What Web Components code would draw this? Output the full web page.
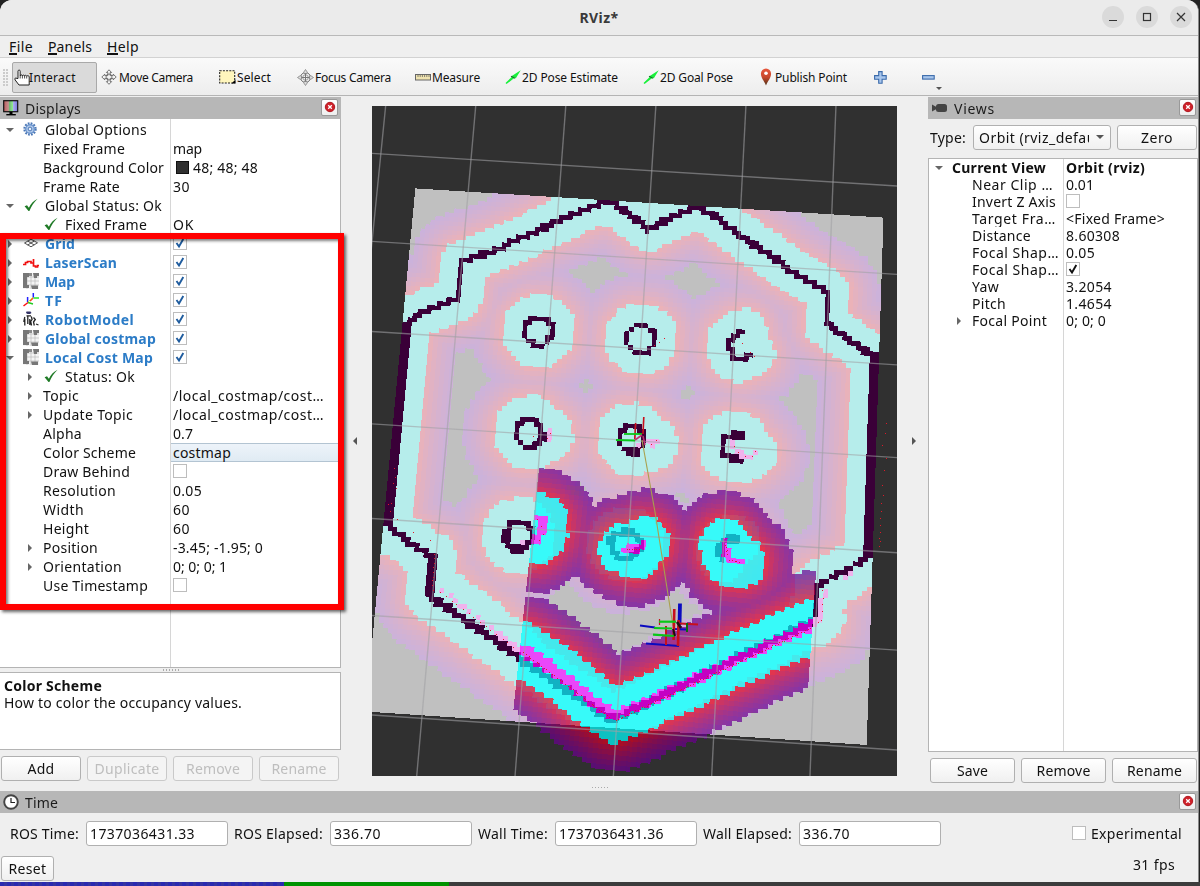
<!DOCTYPE html>
<html lang="en">
<head>
<meta charset="utf-8">
<title>RViz*</title>
<style>
html,body{margin:0;padding:0;background:#777;overflow:hidden}
body{font:14px/19px "Noto Sans","Open Sans",sans-serif;color:#111}
</style>
</head>
<body>
<rviz-window></rviz-window>
<script>
const define = (name, html, extra = {}) => {
  const tpl = document.createElement('template');
  tpl.innerHTML = typeof html === 'string' ? html : '';
  customElements.define(name, class extends HTMLElement {
    connectedCallback() {
      if (this.shadowRoot) return;
      const root = this.attachShadow({ mode: 'open' });
      if (typeof html === 'function') root.innerHTML = html(this);
      else root.append(tpl.content.cloneNode(true));
      if (extra.ready) extra.ready.call(this, root);
    }
  });
};
const at = (el, n, d = '') => el.getAttribute(n) ?? d;

/* One line of text, letter-spaced so that it fills the width w. */
define('fit-text', '<style>:host{display:inline-block;white-space:pre}span{display:inline-block;white-space:pre}</style><span><slot></slot></span>', {
  ready(root) {
    const w = +at(this, 'w', 0);
    if (!w) return;
    const s = root.firstElementChild.nextElementSibling, n = this.textContent.length;
    const natural = s.getBoundingClientRect().width;
    s.style.letterSpacing = ((w - natural) / n).toFixed(3) + 'px';
  }
});

const ICONS = {
  monitor: ['0 0 17 16', `<defs><linearGradient id="m"><stop offset="0" stop-color="#b85c5c"/><stop offset=".34" stop-color="#c89090"/><stop offset=".36" stop-color="#68b070"/><stop offset=".64" stop-color="#90e890"/><stop offset=".66" stop-color="#b0b0f4"/><stop offset="1" stop-color="#7878d8"/></linearGradient></defs><rect x=".7" y=".7" width="14" height="11" fill="url(#m)" stroke="#111" stroke-width="1.2"/><path d="M6.500 12h3v2h-3z"/><path d="M3.300 14h9.500v1.400H3.300z"/>`],
  gear: ['0 0 14 14', `<g fill="none" stroke="#4b77b5"><circle cx="7" cy="7" r="5.5" stroke-width="2.400" stroke-dasharray="1.700 1.180"/><circle cx="7" cy="7" r="4.300" fill="#b4ccec" stroke="#6f97cf" stroke-width="1.500"/><circle cx="7" cy="7" r="1.900" fill="#e6eefa" stroke-width="1"/></g>`],
  check: ['0 0 14 14', `<path d="M.6 8.300 3 7.200l1.900 2.600C6.700 6 9.500 2.800 13.600.8 10 4.200 7.500 8 5.400 13H4.500Z" fill="#1f7a26"/>`],
  grid: ['0 0 16 14', `<g fill="none" stroke="#555" stroke-width="1"><path d="M1.500 7 8 3.200l6.500 3.600L8 10.800zM4.700 5l6.500 4M11.300 5 4.700 9"/></g>`],
  laser: ['0 0 16 14', `<path d="M0 9.500h2.500V7.500H4.500V6.500h3.500v1.500h2.500V4v7h2v1h2v-1.500H16" fill="none" stroke="#f01010" stroke-width="1.700"/>`],
  map: ['0 0 16 16', `<rect width="16" height="16" fill="#f4f4f4"/><path d="M4 0v16M8 0v16M12 0v16M0 4h16M0 8h16M0 12h16" stroke="#b4b4b4" stroke-width=".6"/><path d="M0 0h6v4H4v8h2v3H0zM10 0h6v3h-2v2h-3zM8 12.500h7V16H9z" fill="#777"/><path d="M6 0h3v3H6z" fill="#8a8a8a"/>`],
  tf: ['0 0 16 14', `<g fill="none" stroke-width="1.500"><path d="M10.500 5H16" stroke="#2e2"/><path d="M10.300 0v4.500M4.600 4v5" stroke="#22f"/><path d="m10 5-3 3M5 9.500.5 13" stroke="#f11"/><path d="m5 9.500 5 1.500" stroke="#2c2"/></g><path d="m5 9 5-4.500" stroke="#dd2" stroke-width="1"/>`],
  robot: ['0 0 16 16', `<path d="M3.500.500h4L8.500 2 7 3H4.500L3 2z" fill="#336"/><path d="M3.500 4.800h4.500M4.800 5.500v7.500M1.800 6l-1 5M8.300 5.500l.8 3-1.400 2 .8 4M10.500 6.500l1.800 2-1.800 2.500.8 3.500M13 13l2.500 1M1.800 8v6.500M6.800 8v6" stroke="#222" stroke-width="1.300" fill="none"/>`],
  camera: ['0 0 17 10', `<rect x="5" y="1" width="11" height="8" rx="2.500" fill="#444"/><path d="M1 1.500 5.500 4v2L1 8.500z" fill="#444"/>`],
  clock: ['0 0 16 16', `<circle cx="8" cy="8" r="6.800" fill="#fff" stroke="#444" stroke-width="1.900"/><path d="M8 4v4.500h4" fill="none" stroke="#222" stroke-width="1.200"/>`],
  hand: ['0 0 16 17', `<path d="M4 9.500V2.200C4 .6 6.200.6 6.200 2.200V7c0-1.500 2.200-1.500 2.200 0 0-1.200 2.200-1.200 2.200.1 0-1.100 2.100-1 2.100.2.300-.9 2.500-.8 2.500.5V16H5L1.200 11C.1 9.500 1.700 8.200 3 9.500z" fill="#fff" stroke="#222" stroke-width="1"/><path d="M6.200 7v2.500M8.400 7v2.500M10.600 7v2.500M12.700 7.500v2" stroke="#222" stroke-width=".8"/>`],
  move: ['0 0 16 16', `<path d="m8 .8 2.600 2.700H9.200V6.600h3V5.200L15.200 8l-3 2.800V9.400h-3v3.200h1.400L8 15.300l-2.600-2.700h1.400V9.400h-3v1.400L.8 8l3-2.800v1.400h3V3.500H5.400z" fill="#f4f4f4" stroke="#555" stroke-width=".8"/><circle cx="8" cy="8" r="3" fill="none" stroke="#666" stroke-width=".8"/>`],
  select: ['0 0 17 14', `<rect x=".7" y=".7" width="15" height="12.300" fill="#fff6bd" stroke="#222" stroke-width="1.100" stroke-dasharray="2 1.200"/><path d="m16.500 9.500-4 4h4z"/>`],
  focus: ['0 0 17 17', `<g fill="none" stroke="#777"><circle cx="8.500" cy="8.500" r="5"/><circle cx="8.500" cy="8.500" r="2.800" stroke="#999"/><path d="M8.500 3v11M3 8.500h11"/></g><path d="M8.500.5 10.200 3v1.500H6.800V3zM8.500 16.500l1.700-2.500v-1.500H6.800V14zM.5 8.500 3 6.800h1.500v3.400H3zM16.500 8.500 14 6.800h-1.500v3.400H14z" fill="#ddd" stroke="#777" stroke-width=".7"/>`],
  ruler: ['0 0 16 7', `<rect x=".5" y=".5" width="15" height="5.500" fill="#efe3b0" stroke="#666"/><path d="M3 1v2M5.200 1v2M7.400 1v2M9.600 1v2M11.800 1v2M14 1v2" stroke="#555" stroke-width=".7"/>`],
  arrow: ['0 0 16 14', `<path d="M.5 13 7 6.700 6 6.500 15.700.3 10.700 8.500l-.8-1L1.600 14z" fill="#18f03a"/><path d="m6 6.200 4 2" stroke="#16702a" stroke-width="1.200"/>`],
  pin: ['0 0 12 18', `<defs><linearGradient id="p" x2="0" y2="1"><stop stop-color="#e8573c"/><stop offset=".5" stop-color="#c9482c"/><stop offset="1" stop-color="#4d3218"/></linearGradient></defs><path d="M6 17.500C4.500 13.500.9 10 .9 5.800a5.100 5.300 0 0 1 10.200 0C11.100 10 7.500 13.500 6 17.500z" fill="url(#p)"/><circle cx="6" cy="5.300" r="1.800" fill="#fff"/>`],
  plus: ['0 0 13 13', `<path d="M4.700.6h3.400v4h4.100v3.600H8.100v4H4.700v-4H.6V4.600h4.100z" fill="#a9c6ec" stroke="#3b6bab" stroke-width="1.100"/>`],
  minus: ['0 0 13 5', `<rect x=".6" y=".6" width="11.600" height="3.500" fill="#a9c6ec" stroke="#3b6bab" stroke-width="1.100"/>`],
  close: ['0 0 12 12', `<circle cx="6" cy="6" r="4.700" fill="#cf2029" stroke="#b01820"/><path d="m4.200 4.200 3.600 3.600M7.800 4.200 4.200 7.800" stroke="#fff" stroke-width="1.300"/>`]
};
define('ui-icon', el => {
  const [vb, body] = ICONS[at(el, 'name')], [, , w, h] = vb.split(' ');
  return `<style>:host{display:inline-flex;width:${w}px;height:${h}px;flex:none}svg{display:block}</style><svg width="${w}" height="${h}" viewBox="${vb}">${body}</svg>`;
});

define('title-bar', `<style>
:host{display:grid;grid-template-columns:1fr auto 1fr;align-items:center;height:35px;background:#ebebeb;border-bottom:1px solid #b9b9b9;box-sizing:content-box}
b{grid-column:2;color:#3a3a3a;font-size:14px}
div{display:flex;justify-content:flex-end;gap:12px;padding-right:6px;margin-top:-1px}
i{width:22px;height:22px;border-radius:50%;background:#dadada}
svg{display:block}
</style><b><fit-text w="39">RViz*</fit-text></b><div>
<i><svg width="22" height="22"><path d="M7 14.500h8" stroke="#333" stroke-width="1.200"/></svg></i>
<i><svg width="22" height="22"><rect x="7.500" y="7.500" width="7" height="7" fill="none" stroke="#333" stroke-width="1.200"/></svg></i>
<i><svg width="22" height="22"><path d="m7 7 8 8m0-8-8 8" stroke="#333" stroke-width="1.200"/></svg></i></div>`);

define('menu-bar', `<style>
:host{display:flex;height:21px;padding-left:9px;gap:15px;background:#efefef;border-bottom:1px solid #d2d2d2;align-items:center}
u{text-decoration:none;display:inline-block;line-height:14px;height:13px;border-bottom:2px solid #111}
</style><fit-text w="24"><u>F</u>ile</fit-text><fit-text w="44"><u>P</u>anels</fit-text><fit-text w="32"><u>H</u>elp</fit-text>`);

define('tool-button', el => `<style>
:host{display:flex;align-items:center;height:31px;margin-left:${at(el, 'gap', 0)}px;gap:${at(el, 'in', 1)}px;font-size:12px;box-sizing:border-box;border:1px solid transparent}
:host([on]){width:85px;border:1px solid #a9a9a9;border-radius:2px;background:#dadada;padding-left:1px}
fit-text{margin-left:${at(el, 'tx', 0)}px}
</style><ui-icon name="${at(el, 'icon')}"></ui-icon>${at(el, 'w') ? `<fit-text w="${at(el, 'w')}">${at(el, 'label')}</fit-text>` : ''}`);

define('tool-bar', `<style>
:host{display:flex;align-items:center;height:38px;box-sizing:border-box;background:linear-gradient(#fafafa,#ededed);border-bottom:1px solid #b4b4b4;padding-top:1px}
.g{width:6px;height:17px;margin:0 3px;background:radial-gradient(circle at 1px 1px,#ccc .8px,transparent 1px) 0 0/3px 3px}
.d{align-self:flex-end;margin-bottom:5px;margin-left:0;border:3px solid transparent;border-top-color:#555;border-bottom:0}
</style><div class="g"></div>
<tool-button on icon="hand" w="47" in="0" tx="-1" label="Interact"></tool-button>
<tool-button icon="move" gap="3" in="2" w="74" label="Move Camera"></tool-button>
<tool-button icon="select" gap="24" w="34" label="Select"></tool-button>
<tool-button icon="focus" gap="24" w="76" label="Focus Camera"></tool-button>
<tool-button icon="ruler" gap="22" w="48" label="Measure"></tool-button>
<tool-button icon="arrow" gap="23" w="96" label="2D Pose Estimate"></tool-button>
<tool-button icon="arrow" gap="23" w="73" label="2D Goal Pose"></tool-button>
<tool-button icon="pin" gap="25" in="3" w="72" label="Publish Point"></tool-button>
<tool-button icon="plus" gap="25"></tool-button>
<tool-button icon="minus" gap="33"></tool-button><div class="d"></div>`);

define('dock-title', el => `<style>
:host{display:flex;align-items:center;height:22px;flex:none;background:#b7b7b7;padding-left:3px;color:#1c1c1c;position:relative}
fit-text{margin-left:${at(el, 'tx', 5)}px;padding-top:1px}
span{margin-left:auto;width:15px;height:15px;border:1px solid #999;border-radius:2px;background:linear-gradient(#fff,#eee);display:flex;align-items:center;justify-content:center;margin-right:${at(el, 'cx', 2)}px;margin-bottom:2px}
</style><ui-icon name="${at(el, 'icon')}"></ui-icon><fit-text w="${at(el, 'w')}">${at(el, 'label')}</fit-text><span><ui-icon name="close"></ui-icon></span>`);

define('push-button', `<style>
:host{display:flex;align-items:center;justify-content:center;box-sizing:border-box;height:25px;border:1px solid #b0b0b0;border-radius:3px;background:linear-gradient(#fff,#f0f0f0);flex:1 1 0}
:host([off]){color:#bebebe;border-color:#c9c9c9;background:#f4f4f4}
</style><slot></slot>`);

define('check-box', el => `<style>:host{display:block;width:12px;height:12px;border:1px solid #bdbdbd;background:#fff;flex:none}svg{display:block}</style>
${el.hasAttribute('c') ? `<svg width="12" height="12"><path d="M2.500 6 5 9.500 9.300 2" fill="none" stroke="${at(el, 'c')}" stroke-width="1.900"/></svg>` : ''}`);

/* A property row: ax = arrow position, ix = icon, lx = label start, col = value column start */
define('tree-row', el => {
  const a = at(el, 'arrow'), ax = +at(el, 'ax', 0), ix = +at(el, 'ix', 0), lx = +at(el, 'lx', 43), col = +at(el, 'col', 171);
  return `<style>
:host{display:grid;grid-template-columns:${col}px 1fr;height:${at(el, 'h', 19)}px;line-height:${at(el, 'h', 19)}px;flex:none}
.l{display:flex;align-items:center;overflow:hidden;box-sizing:border-box;padding-left:${a ? ax : ix || lx}px}
.a{width:8px;margin-right:${(ix || lx) - ax - 8}px;flex:none;display:flex}
ui-icon{margin-right:${Math.max(0, lx - ix - (at(el, 'icon') ? +ICONS[at(el, 'icon')][0].split(' ')[2] : 0))}px;margin-top:-2px}
.b{font-weight:bold}.blue{color:#2c7cc7;font-weight:bold}
.v{display:flex;align-items:center;padding-left:2px;box-sizing:border-box}
.sel{background:linear-gradient(#eef4fa,#dfeaf3);box-shadow:inset 0 1px #b3c4d2,inset 0 -1px #b3c4d2}
i{width:11px;height:11px;border:1px solid #111;background:#303030;margin:0 4px 0 3px}
check-box{margin-top:-2px}
</style><div class="l ${at(el, 'cls')}">${a ? `<span class="a"><svg width="8" height="8"><path d="${a === 'd' ? 'M0 2h8L4 6z' : 'M2 0v8l4-4z'}" fill="#666"/></svg></span>` : ''}${at(el, 'icon') ? `<ui-icon name="${at(el, 'icon')}"></ui-icon>` : ''}<fit-text w="${at(el, 'lw')}">${at(el, 'label')}</fit-text></div>
<div class="v ${at(el, 'cls') === 'b' ? 'b' : ''} ${el.hasAttribute('sel') ? 'sel' : ''}">${el.hasAttribute('sw') ? '<i></i>' : ''}${at(el, 'box') === 'off' ? '<check-box></check-box>' : at(el, 'box') ? `<check-box c="${at(el, 'box')}"></check-box>` : ''}${at(el, 'v') ? `<fit-text w="${at(el, 'vw')}">${at(el, 'v').replace(/</g, '&lt;')}</fit-text>` : ''}</div>`;
});

const top0 = 'arrow="r" ax="6" ix="23" lx="45" cls="blue" box="#1f5c9e"';
define('displays-panel', `<style>
:host{display:flex;flex-direction:column;width:341px;position:relative}
.tree{height:549px;box-sizing:border-box;border:solid #b4b4b4;border-width:0 1px 1px 0;background:linear-gradient(#d6d6d6,#d6d6d6) 170px 0/1px 100% no-repeat #fff;display:flex;flex-direction:column;padding-top:1px}
.dots{height:4px;width:18px;margin:0 auto;background:radial-gradient(circle,#aaa .7px,transparent 1px) 0 0/3px 4px}
.help{height:78px;box-sizing:border-box;border:1px solid #b4b4b4;border-left:0;background:#fff;padding:4px 4px;line-height:17px;display:flex;flex-direction:column}
.btn{display:flex;gap:6px;padding:6px 2px 0 1px}
.mark{position:absolute;left:0;top:136px;width:332px;height:365px;border:6px solid red;box-shadow:2px 2px 3px rgba(0,0,0,.6),inset 2px 2px 3px rgba(0,0,0,.5);pointer-events:none}
</style>
<dock-title icon="monitor" label="Displays" w="56" cx="3"></dock-title>
<div class="tree">
<tree-row arrow="d" ax="6" ix="23" lx="45" icon="gear" label="Global Options" lw="102"></tree-row>
<tree-row label="Fixed Frame" lw="82" v="map" vw="29"></tree-row>
<tree-row label="Background Color" lw="121" sw v="48; 48; 48" vw="65"></tree-row>
<tree-row label="Frame Rate" lw="77" v="30" vw="17"></tree-row>
<tree-row arrow="d" ax="6" ix="24" lx="45" icon="check" label="Global Status: Ok" lw="117"></tree-row>
<tree-row ix="44" lx="65" icon="check" label="Fixed Frame" lw="82" v="OK" vw="21"></tree-row>
<tree-row ${top0} icon="grid" label="Grid" lw="30"></tree-row>
<tree-row ${top0} icon="laser" label="LaserScan" lw="72"></tree-row>
<tree-row ${top0} icon="map" label="Map" lw="30"></tree-row>
<tree-row ${top0} icon="tf" label="TF" lw="18"></tree-row>
<tree-row ${top0} icon="robot" label="RobotModel" lw="89"></tree-row>
<tree-row ${top0} icon="map" label="Global costmap" lw="111"></tree-row>
<tree-row ${top0.replace('"r"', '"d"')} icon="map" label="Local Cost Map" lw="108"></tree-row>
<tree-row arrow="r" ax="26" ix="44" lx="65" icon="check" label="Status: Ok" lw="70"></tree-row>
<tree-row arrow="r" ax="26" label="Topic" lw="36" v="/local_costmap/cost…" vw="151"></tree-row>
<tree-row arrow="r" ax="26" label="Update Topic" lw="90" v="/local_costmap/cost…" vw="151"></tree-row>
<tree-row label="Alpha" lw="39" v="0.7" vw="20"></tree-row>
<tree-row label="Color Scheme" lw="93" sel v="costmap" vw="58"></tree-row>
<tree-row label="Draw Behind" lw="87" box="off"></tree-row>
<tree-row label="Resolution" lw="73" v="0.05" vw="29"></tree-row>
<tree-row label="Width" lw="41" v="60" vw="17"></tree-row>
<tree-row label="Height" lw="46" v="60" vw="17"></tree-row>
<tree-row arrow="r" ax="26" label="Position" lw="55" v="-3.45; -1.95; 0" vw="90"></tree-row>
<tree-row arrow="r" ax="26" label="Orientation" lw="79" v="0; 0; 0; 1" vw="54"></tree-row>
<tree-row label="Use Timestamp" lw="105" box="off"></tree-row>
</div>
<div class="dots"></div>
<div class="help"><b><fit-text w="98">Color Scheme</fit-text></b><fit-text w="238">How to color the occupancy values.</fit-text></div>
<div class="btn"><push-button><fit-text w="27">Add</fit-text></push-button><push-button off><fit-text w="65">Duplicate</fit-text></push-button><push-button off><fit-text w="54">Remove</fit-text></push-button><push-button off><fit-text w="55">Rename</fit-text></push-button></div>
<div class="mark"></div>`);

const vr = 'h="17" col="135" lx="43"';
define('views-panel', `<style>
:host{display:flex;flex-direction:column;width:270px}
.type{display:flex;align-items:center;height:39px;box-sizing:border-box;padding:0 1px 2px 2px}
.combo{width:136px;height:23px;margin-left:7px;margin-right:6px;border:1px solid #b0b0b0;border-radius:3px;background:linear-gradient(#fff,#f0f0f0);display:flex;align-items:center}
.combo div{padding-left:5px;overflow:hidden;width:110px}
.combo svg{margin-left:7px}
push-button{flex:1}
.tree{height:594px;box-sizing:border-box;border:1px solid #b4b4b4;background:linear-gradient(#d6d6d6,#d6d6d6) 134px 0/1px 100% no-repeat #fff;display:flex;flex-direction:column}
.btn{display:flex;gap:6px;padding:6px 1px 0 2px}
</style>
<dock-title icon="camera" label="Views" w="41" tx="6"></dock-title>
<div class="type"><fit-text w="36">Type:</fit-text><div class="combo"><div><fit-text w="131">Orbit (rviz_default)</fit-text></div><svg width="8" height="5"><path d="M0 0h8L4 4z" fill="#555"/></svg></div><push-button><fit-text w="32">Zero</fit-text></push-button></div>
<div class="tree">
<tree-row h="17" col="135" arrow="d" ax="6" lx="23" cls="b" label="Current View" lw="94" v="Orbit (rviz)" vw="79"></tree-row>
<tree-row ${vr} label="Near Clip …" lw="81" v="0.01" vw="28"></tree-row>
<tree-row ${vr} label="Invert Z Axis" lw="84" box="off"></tree-row>
<tree-row ${vr} label="Target Fra…" lw="84" v="<Fixed Frame>" vw="99"></tree-row>
<tree-row ${vr} label="Distance" lw="59" v="8.60308" vw="54"></tree-row>
<tree-row ${vr} label="Focal Shap…" lw="87" v="0.05" vw="29"></tree-row>
<tree-row ${vr} label="Focal Shap…" lw="87" box="#111"></tree-row>
<tree-row ${vr} label="Yaw" lw="27" v="3.2054" vw="46"></tree-row>
<tree-row ${vr} label="Pitch" lw="34" v="1.4654" vw="46"></tree-row>
<tree-row h="17" col="135" arrow="r" ax="26" lx="43" label="Focal Point" lw="75" v="0; 0; 0" vw="40"></tree-row>
</div>
<div class="btn"><push-button><fit-text w="31">Save</fit-text></push-button><push-button><fit-text w="54">Remove</fit-text></push-button><push-button><fit-text w="55">Rename</fit-text></push-button></div>`);

define('time-panel', `<style>
:host{display:flex;flex-direction:column;height:91px;background:#efefef}
.row{display:flex;align-items:center;height:40px;padding:0 0 0 10px}
.in{height:23px;width:137px;padding-left:3px;border:1px solid #b0b0b0;border-radius:3px;background:#fff;display:flex;align-items:center;margin:0 6px 0 7px}
check-box{margin-left:auto;margin-right:5px}
.row>fit-text:last-child{margin-right:16px}
.foot{display:flex;justify-content:space-between;padding:3px 23px 0 1px}
.foot push-button{flex:none;width:53px}
.foot>fit-text{margin-top:-1px}
</style>
<dock-title icon="clock" label="Time" w="33" tx="6"></dock-title>
<div class="row"><fit-text w="69">ROS Time:</fit-text><div class="in"><fit-text w="105">1737036431.33</fit-text></div><fit-text w="89">ROS Elapsed:</fit-text><div class="in"><fit-text w="47">336.70</fit-text></div><fit-text w="70">Wall Time:</fit-text><div class="in"><fit-text w="105">1737036431.36</fit-text></div><fit-text w="89">Wall Elapsed:</fit-text><div class="in"><fit-text w="47">336.70</fit-text></div><check-box></check-box><fit-text w="91">Experimental</fit-text></div>
<div class="foot"><push-button><fit-text w="38">Reset</fit-text></push-button><fit-text w="42">31 fps</fit-text></div>`);

/* 3D viewport: ground grid, static map, global and local costmaps, TF frames */
define('render-view', `<style>:host{display:block;width:525px;height:670px}canvas{display:block}</style><canvas width="525" height="670"></canvas>`, {
  ready(root) {
    const X0 = 372, Y0 = 106, W = 525, H = 670;
    const ctx = root.querySelector('canvas').getContext('2d');
    const src = [[0, 0], [4, 0], [4, 6], [0, 6]], dst = [[471, 159.5], [833, 182], [811.2, 744.3], [421.8, 718.3]];
    const solve = (s, d) => {
      const A = [];
      s.forEach(([x, y], i) => { const [u, v] = d[i]; A.push([x, y, 1, 0, 0, 0, -u * x, -u * y, u], [0, 0, 0, x, y, 1, -v * x, -v * y, v]); });
      for (let c = 0; c < 8; c++) {
        let p = c; for (let r = c; r < 8; r++) if (Math.abs(A[r][c]) > Math.abs(A[p][c])) p = r;
        [A[c], A[p]] = [A[p], A[c]];
        for (let r = 0; r < 8; r++) if (r !== c) { const f = A[r][c] / A[c][c]; for (let k = c; k < 9; k++) A[r][k] -= f * A[c][k]; }
      }
      const h = A.map((r, i) => r[8] / r[i]);
      return (x, y) => { const w = h[6] * x + h[7] * y + 1; return [(h[0] * x + h[1] * y + h[2]) / w, (h[3] * x + h[4] * y + h[5]) / w]; };
    };
    const toScreen = solve(src, dst), toWorld = solve(dst, src);
    const poly = (pts, t = .031) => { const o = []; for (let i = 1; i < pts.length; i++) o.push([...toWorld(...pts[i - 1]), ...toWorld(...pts[i]), t]); return o; };
    const ring = (l, t, r, b) => { const a = (r - l) * .3, c = (b - t) * .3; return poly([[l + a, t], [r - a, t], [r, t + c], [r, b - c], [r - a, b], [l + a, b], [l, b - c], [l, t + c], [l + a, t]]); };
    const walls = [
      ...poly([[388, 522], [407, 326]], .032), ...poly([[406, 325], [411, 319], [430, 309], [458, 299]], .037), ...poly([[459, 299], [463, 262]], .022),
      ...poly([[463, 262], [500, 248], [535, 232]], .034), ...poly([[535, 232], [560, 220], [600, 203], [613, 203], [630, 215], [649, 229], [668, 219], [697, 207], [716, 217], [738, 234], [770, 255], [790, 270], [828, 292]], .038),
      ...poly([[828, 292], [827, 325]], .026), ...poly([[828, 325], [850, 341], [873, 356]], .036), ...poly([[874, 356], [867, 556]], .042),
      ...poly([[866, 558], [845, 571], [820, 584]], .03), ...poly([[817, 585], [814, 615]], .03),
      ...poly([[388, 525], [405, 540], [431, 556]], .035), ...poly([[432, 556], [430, 596]], .04), ...poly([[433, 598], [517, 656], [613, 721]], .04), ...poly([[613, 720], [730, 661], [812, 622]], .04)
    ];
    const rings = [ring(525, 318, 552, 345), ring(627, 326, 654, 352), ring(517, 419, 542, 446), ring(620, 426, 644, 452), ring(506, 522, 531, 549), ring(611, 532, 641, 557),
      poly([[744, 331], [738, 333], [731, 338], [729, 347], [732, 356], [740, 360], [752, 354]]),
      poly([[742, 436], [734, 434], [724, 438], [723, 456], [742, 460]]), poly([[737, 540], [726, 540], [719, 549], [722, 558]], .038)].flat();
    const pinkPts = [[550, 432], [550, 438], [640, 445], [655, 442], [652, 447], [646, 440], [733, 441], [734, 446], [736, 451], [740, 454], [745, 456], [750, 456], [755, 452], [522, 541], [528, 542],
      [442, 590], [451, 596], [455, 602], [463, 606], [470, 611], [477, 617], [484, 622], [490, 626], [496, 633], [500, 636], [504, 638], [510, 643], [514, 647], [518, 650],
      [825, 594], [822, 600], [820, 606], [820, 612], [821, 619], [816, 622], [846, 576], [851, 572]];
    const globalObs = [...walls, ...rings];
    const pinkObs = pinkPts.map(p => { const [u, v] = toWorld(...p); return [u, v, u, v, .034]; });
    const localObs = [
      ...poly([[522, 649], [560, 674], [590, 699], [614, 715]], .058), ...poly([[615, 716], [680, 687], [760, 649], [813, 625]], .048),
      ...poly([[538, 519], [543, 521], [543, 532], [536, 540]], .038), ...poly([[624, 549], [638, 549], [645, 542], [636, 553]], .034),
      ...poly([[725, 544], [726, 552], [731, 561], [741, 562]], .036)];
    const near = (obs, u, v) => {
      let best = 9, hit = false;
      for (const [a, b, c, d, t] of obs) {
        const dx = c - a, dy = d - b, l = dx * dx + dy * dy, k = l ? Math.max(0, Math.min(1, ((u - a) * dx + (v - b) * dy) / l)) : 0;
        const q = Math.hypot(u - a - k * dx, v - b - k * dy);
        if (q < best) best = q; if (q < t) hit = true;
      }
      return [best, hit];
    };
    const mix = (a, b, t) => a.map((x, i) => x + (b[i] - x) * t);
    const RIN = .255, ROUT = .57, C = .05;
    const ramp = d => (1 - Math.exp(-3 * (d - RIN))) / (1 - Math.exp(-3 * (ROUT - RIN)));
    const gu0 = -.583, gv0 = .37, gn = 103, gm = 112, G = [];
    const all = [...globalObs, ...pinkObs];
    for (let j = 0; j < gm; j++) for (let i = 0; i < gn; i++) {
      const u = gu0 + (i + .5) * C, v = gv0 + (j + .5) * C;
      const [d] = near(all, u, v);
      G.push(near(globalObs, u, v)[1] ? [58, 0, 56] : near(pinkObs, u, v)[1] ? [240, 178, 236] : d < RIN - .008 ? [182, 237, 235] : d < ROUT ? mix([235, 178, 184], [203, 178, 219], ramp(Math.max(d, RIN))) : [192, 192, 192]);
    }
    const [lu, lv] = toWorld(539, 468), th = .03, cs = Math.cos(th), sn = Math.sin(th), L = [];
    for (let j = 0; j < 66; j++) for (let i = 0; i < 60; i++) {
      const p = (i + .5) * C, q = (j + .5) * C, u = lu + p * cs - q * sn, v = lv + p * sn + q * cs;
      const [d, hit] = near(localObs, u, v);
      L.push(hit ? [255, 0, 255] : d < RIN + .01 ? [0, 255, 255] : d < .55 ? mix([232, 0, 22], [98, 0, 150], ramp(Math.max(d, RIN))) : null);
    }
    const img = ctx.createImageData(W, H);
    for (let y = 0; y < H; y++) for (let x = 0; x < W; x++) {
      const [u, v] = toWorld(x + X0 + .5, y + Y0 + .5);
      let c = [48, 48, 48];
      const i = Math.floor((u - gu0) / C), j = Math.floor((v - gv0) / C);
      if (i >= 0 && j >= 0 && i < gn && j < gm) c = G[j * gn + i];
      const p = (u - lu) * cs + (v - lv) * sn, q = -(u - lu) * sn + (v - lv) * cs, a = Math.floor(p / C), b = Math.floor(q / C);
      if (a >= 0 && b >= 0 && a < 60 && b < 66 && L[b * 60 + a]) c = mix(c, L[b * 60 + a], .7);
      const o = (y * W + x) * 4;
      img.data[o] = c[0]; img.data[o + 1] = c[1]; img.data[o + 2] = c[2]; img.data[o + 3] = 255;
    }
    ctx.putImageData(img, 0, 0);
    ctx.translate(-X0, -Y0);
    const line = (x1, y1, x2, y2, s, w) => { ctx.strokeStyle = s; ctx.lineWidth = w; ctx.beginPath(); ctx.moveTo(x1, y1); ctx.lineTo(x2, y2); ctx.stroke(); };
    for (let k = -2; k < 8; k++) {
      line(...toScreen(k, -2), ...toScreen(k, 8), 'rgba(160,160,164,.58)', 1.4);
      line(...toScreen(-3, k), ...toScreen(7, k), 'rgba(160,160,164,.58)', 1.4);
    }
    line(642, 440, 655, 512, '#a9a04c', 1.1); line(655, 512, 673, 626, '#a9a04c', 1.1);
    const R = '#c8101c', Gn = '#08c818', B = '#0a0ac0';
    [[643.8, 417, 643, 434, R, 1.6], [635.6, 423, 634.8, 439, R, 1.6], [624, 434, 642, 434, Gn, 1.8], [616, 440, 635, 440.5, Gn, 1.8], [635, 440, 642, 435, '#c03070', 1.6], [643, 436, 645, 445, '#c03070', 1.5],
      [646, 643.4, 679, 646, B, 2], [640, 625.6, 655, 627.6, B, 2], [673, 629, 687, 629.5, B, 2], [680, 603.5, 679.5, 625, B, 3.8],
      [674.3, 609, 673.6, 640, R, 2.6], [678.6, 620, 678, 646, R, 2.6], [680, 623.6, 698, 624.5, R, 2], [666, 626, 666, 645, R, 2], [659.5, 619, 659.5, 625, R, 1.2], [687, 623, 687, 632, '#0a6a10', 2],
      [659, 621.7, 676, 621.7, Gn, 2.2], [654, 628, 672, 628.5, Gn, 2.2], [653, 634.6, 674, 636, Gn, 2.2], [673, 629, 675, 636, '#111', 2], [677, 622, 681, 628, '#211', 2.5]].forEach(s => line(...s));
    ctx.fillStyle = '#e01828';
    const dot = (x, y, s = 1) => ctx.fillRect(Math.round(x), Math.round(y), s, s);
    [[394, 468], [395, 477], [393, 483], [396, 488], [391, 503], [388, 504], [390, 511], [397, 519], [413, 532], [430, 540], [886, 423], [885, 433], [882, 445], [886, 458], [884, 470], [882, 485], [883, 495], [881, 503], [881, 511], [880, 518], [880, 525], [880, 532], [879, 538], [879, 546], [880, 541], [742, 343], [750, 352], [754, 356], [664, 338], [659, 342], [654, 345], [533, 436], [547, 438], [550, 433], [734, 446], [738, 452], [745, 456], [752, 456], [755, 451], [640, 448], [656, 440], [651, 444], [537, 519], [541, 526], [543, 534], [539, 540], [822, 590], [823, 598], [822, 604], [822, 611], [821, 620], [818, 622]].forEach(p => dot(p[0], p[1]));
    [[523, 652, 612, 719, 34], [616, 720, 812, 627, 90], [440, 592, 519, 651, 14], [434, 554, 432, 594, 9], [725, 545, 728, 556, 5], [729, 560, 742, 562, 5], [627, 549, 641, 549, 6]].forEach(([a, b, c, d, n]) => {
      for (let k = 0; k < n; k++) dot(a + (c - a) * k / n + (k % 3 - 1) * .5, b + (d - b) * k / n + ((k * 7) % 3 - 1) * .4);
    });
  }
});

define('rviz-window', `<style>
:host{display:flex;flex-direction:column;width:1200px;height:886px;background:#222}
.win{height:882px;width:1198px;border-right:1px solid #8a8a8a;background:#efefef;border-radius:12px 12px 0 0;overflow:hidden;display:flex;flex-direction:column;box-sizing:content-box}
.mid{display:flex;height:694px;padding-top:1px;flex:none}
.side{display:flex;align-items:center;justify-content:center;box-sizing:border-box;width:31px;height:690px}
.r{padding-left:4px}
.l{padding-right:3px}
.c{padding-top:9px;width:525px;display:flex;flex-direction:column;gap:10px;align-items:center}
.dots{height:3px;width:18px;margin-right:70px;background:radial-gradient(circle,#aaa .7px,transparent 1px) 0 0/3px 3px}
.strip{flex:1;display:flex;background:#3c3c3c}
.strip i{width:284px;background:repeating-linear-gradient(90deg,#2a2ab0 0 4px,#3434a2 4px 7px)}
.strip b{width:165px;background:#009200}
time-panel{flex:none}
svg{margin-top:-3px}
</style>
<div class="win"><title-bar></title-bar><menu-bar></menu-bar><tool-bar></tool-bar>
<div class="mid"><displays-panel></displays-panel><div class="side l"><svg width="7" height="8"><path d="M5 0v8L1 4z" fill="#555"/></svg></div><div class="c"><render-view></render-view><div class="dots"></div></div><div class="side r"><svg width="7" height="8"><path d="M1 0v8l4-4z" fill="#555"/></svg></div><views-panel></views-panel></div>
<time-panel></time-panel></div><div class="strip"><i></i><b></b></div>`);
</script>
</body>
</html>
